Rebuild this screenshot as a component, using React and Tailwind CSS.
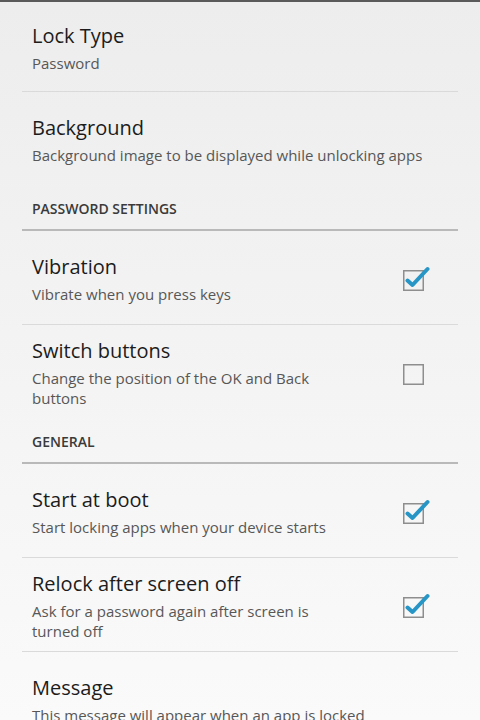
const font = { fontFamily: '"Open Sans", "Noto Sans", sans-serif' };

const items = [
  { type: "row", title: "Lock Type", summary: ["Password"], first: true },
  { type: "row", title: "Background", summary: ["Background image to be displayed while unlocking apps"], last: true },
  { type: "header", title: "PASSWORD SETTINGS" },
  { type: "row", title: "Vibration", summary: ["Vibrate when you press keys"], checkbox: true, checked: true },
  {
    type: "row",
    title: "Switch buttons",
    summary: ["Change the position of the OK and Back", "buttons"],
    checkbox: true,
    checked: false,
    last: true,
  },
  { type: "header", title: "GENERAL" },
  { type: "row", title: "Start at boot", summary: ["Start locking apps when your device starts"], checkbox: true, checked: true },
  {
    type: "row",
    title: "Relock after screen off",
    summary: ["Ask for a password again after screen is", "turned off"],
    checkbox: true,
    checked: true,
  },
  { type: "row", title: "Message", summary: ["This message will appear when an app is locked"] },
];

function CheckBox({ checked }) {
  return (
    <svg width="28" height="26" viewBox="0 0 28 26" className="shrink-0">
      <rect x="1.75" y="4.75" width="19.5" height="19.5" fill="none" stroke="#8e8e8e" strokeWidth="1.5" />
      {checked && (
        <path
          d="M5.5 14.5 L10.5 19 L25.5 3"
          fill="none"
          stroke="#2796c6"
          strokeWidth="4"
          strokeLinecap="round"
          strokeLinejoin="round"
        />
      )}
    </svg>
  );
}

function PrefRow({ item }) {
  return (
    <div
      className={`flex items-center ${item.first ? "min-h-[90px]" : "min-h-[94px]"} ${
        item.last ? "" : "border-b border-[#dadada]"
      }`}
    >
      <div className="flex-1 pl-[10px] pr-2">
        <div className="text-[20px] leading-[30px] text-[#1c1c1c]">{item.title}</div>
        <div className="mt-[2px] text-[15px] leading-[20px] text-[#575757]">
          {item.summary.map((line, i) => (
            <div key={i} className="whitespace-nowrap">{line}</div>
          ))}
        </div>
      </div>
      {item.checkbox && (
        <div className="pr-[28px] pt-[2px]">
          <CheckBox checked={item.checked} />
        </div>
      )}
    </div>
  );
}

function SectionHeader({ title }) {
  return (
    <div className="pt-[13px]">
      <div className="pl-[10px] pb-[10px] text-[14px] leading-[20px] font-semibold text-[#3a3a3a]">{title}</div>
      <div className="h-[2px] bg-[#b9b9b9]" />
    </div>
  );
}

export default function App() {
  return (
    <div className="h-[720px] w-[480px] overflow-hidden bg-linear-to-b from-[#ededed] to-[#fafafa]" style={font}>
      <div className="h-[2px] bg-[#5a5a5a]" />
      <div className="px-[22px]">
        {items.map((item, i) =>
          item.type === "header" ? (
            <SectionHeader key={i} title={item.title} />
          ) : (
            <PrefRow key={i} item={item} />
          )
        )}
      </div>
    </div>
  );
}
